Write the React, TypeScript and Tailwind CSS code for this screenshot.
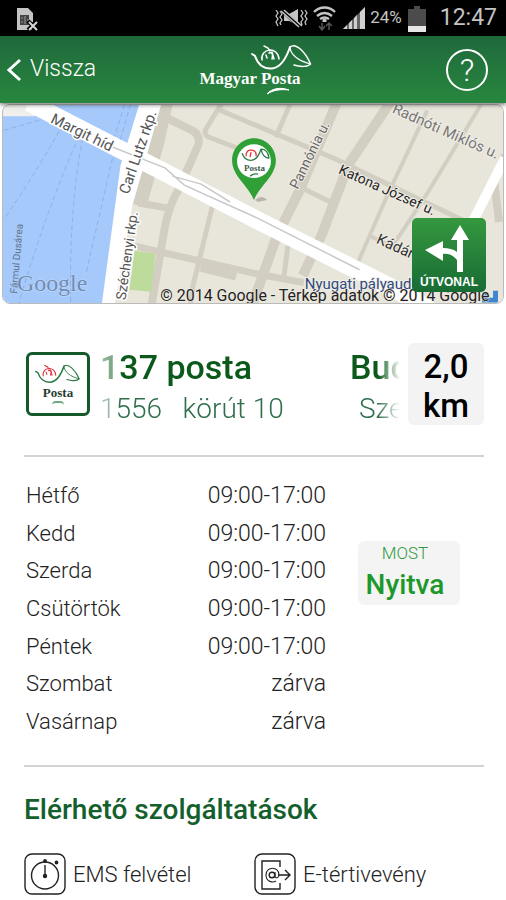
const hours = [
  { day: 'Hétfő', time: '09:00-17:00' },
  { day: 'Kedd', time: '09:00-17:00' },
  { day: 'Szerda', time: '09:00-17:00' },
  { day: 'Csütörtök', time: '09:00-17:00' },
  { day: 'Péntek', time: '09:00-17:00' },
  { day: 'Szombat', time: 'zárva' },
  { day: 'Vasárnap', time: 'zárva' },
];

function Horn({ className, tube, crown }: { className: string; tube: string; crown: string }) {
  return (
    <svg viewBox="0 0 62 27" className={className} fill="none" strokeLinecap="round" aria-hidden="true">
      <g stroke={tube}>
        <path d="M1 10 L4 12 C7 21 13 25 21 24.500 C30 23.500 35 15 39 3" strokeWidth="2" />
        <path d="M39 3 C45 -2 55 9 59.500 20 C57 23 49 23 43 21" strokeWidth="1.500" />
        <path d="M39 3 C39 10 47 17 59.500 20" strokeWidth="1.200" />
      </g>
      <g stroke={crown} strokeWidth="1.500">
        <path d="M11 16 C9 4 27 2 28 15" />
        <path d="M13 2 L17 4 L19 7" />
        <path d="M16 14 L15 11 M18 9 C22 8 22 11 21 15 M21 8 L23 15" />
      </g>
    </svg>
  );
}

function StatusBar() {
  return (
    <div className="flex h-9 items-center justify-between bg-black pr-[9px] pl-4 text-[#c4c4c4]">
      <svg viewBox="0 0 24 24" className="mt-1 h-6 w-6" aria-hidden="true">
        <path d="M1 0h11l5 5v9l-3 2 2 6H1z" fill="#c4c4c4" />
        <path d="M4 7h9v10H4z" fill="#444" />
        <path d="M5 10h2M5 14h2M9 8v8M11 12h2" stroke="#999" />
        <path d="M12 13l9 9M21 13l-9 9" stroke="#000" strokeWidth="4" />
        <path d="M13 14l8 8M21 14l-8 8" stroke="#d8d8d8" strokeWidth="2" />
      </svg>
      <div className="flex items-center">
        <svg viewBox="0 0 34 22" className="h-[22px] w-[34px]" fill="none" stroke="#c4c4c4" aria-hidden="true">
          <path d="M2 3l2 3-2 3 2 3-2 3 2 4M6 4l2 3-2 3 2 3-2 3 1 2M27 3l2 3-2 3 2 3-2 3 1 3M31 3l2 3-2 3 2 3-2 3 1 3" strokeWidth="1.300" />
          <path d="M10 7h5l9-5v16l-9-4h-5z" fill="#c4c4c4" stroke="none" />
          <path d="M8 3l19 18" stroke="#000" strokeWidth="4" />
          <path d="M7 4l18 16M10 3l18 16" strokeWidth="1.600" />
        </svg>
        <svg viewBox="0 0 26 26" className="ml-1 h-[26px] w-[26px]" fill="none" stroke="#c4c4c4" strokeWidth="2.400" aria-hidden="true">
          <path d="M2 7C8 1 17 1 23 7M5 11C10 7 15 7 20 11M8 14C11 12 14 12 17 14" />
          <path d="M12.500 14v3" strokeWidth="4" />
          <path d="M10 18v6M7 21l3 4 3-4M17 25v-6M14 21l3-3 3 3" stroke="#555" strokeWidth="1.500" />
        </svg>
        <svg viewBox="0 0 24 24" className="ml-1 h-6 w-6" aria-hidden="true">
          <path d="M1 23L23 1v22z" fill="#666" />
          <path d="M1 23l4-4v4zM7 17l3-3v9H7zM12 12l3-3v14h-3zM18 6l5-5v22h-5z" fill="#d0d0d0" />
        </svg>
        <span className="ml-1 text-[17px]">24%</span>
        <svg viewBox="0 0 18 27" className="ml-[6px] h-[27px] w-[18px]" aria-hidden="true">
          <path d="M6 1h6v3h6v23H0V4h6z" fill="#4b4b4b" />
          <path d="M0 21h18v6H0z" fill="#e6e6e6" />
        </svg>
        <span className="ml-[14px] text-[23px] leading-9">12:47</span>
      </div>
    </div>
  );
}

function Header() {
  return (
    <header className="relative z-10 grid h-[67px] grid-cols-3 items-center bg-linear-to-b from-[#1f693b] to-[#28873e] px-[6px] text-white shadow-[0_2px_4px_rgba(0,0,0,0.5)]">
      <button type="button" className="flex items-center gap-2 justify-self-start text-[23px] font-light">
        <svg viewBox="0 0 16 24" className="h-6 w-4" fill="none" stroke="#fff" strokeWidth="3" aria-hidden="true">
          <path d="M14 2L3 12l11 10" />
        </svg>
        Vissza
      </button>
      <div className="mr-[6px] flex flex-col items-center">
        <Horn className="-mb-1 ml-16 h-[27px] w-[62px]" tube="#fff" crown="#fff" />
        <span className="font-['Liberation_Serif',serif] text-[17px] leading-6 font-bold whitespace-nowrap">Magyar Posta</span>
        <svg viewBox="0 0 24 8" className="-mt-1 ml-14 h-2 w-6" aria-hidden="true">
          <path d="M1 7C6 1 15 0 23 3C15 2 7 3 1 7Z" fill="#fff" stroke="#fff" />
        </svg>
      </div>
      <button type="button" aria-label="Súgó" className="mr-3 flex h-[42px] w-[42px] items-center justify-center justify-self-end rounded-full border-2 border-white text-[32px] leading-none font-light">
        ?
      </button>
    </header>
  );
}

function MapView() {
  return (
    <section className="relative mx-[2px] mt-px h-[200px] overflow-hidden rounded-lg border border-[#bbb]">
      <svg viewBox="2 104 502 200" preserveAspectRatio="xMidYMid slice" className="block h-full w-full font-[Roboto,sans-serif]" role="img" aria-label="Térkép">
        <rect x="0" y="100" width="510" height="210" fill="#e8e5da" />
        <g fill="none" stroke="#d3cec2" strokeLinejoin="round">
          <path d="M166 100L157 142L139 206" strokeWidth="14" />
          <path d="M163 116L190 129Q201 134 198 145L178 190Q168 206 164 230L151 306" strokeWidth="8" />
          <path d="M138 203L173 209M133 246L256 274L304 283" strokeWidth="7" />
          <path d="M212 207L193 285L190 306M222 102L205 130Q204 135 209 137L248 152M218 109L334 158L480 228M290 104L276 137M300 187L331 202M288 246L284 278" strokeWidth="5" />
          <path d="M338 100L300 190L277 236L252 306M392 100L349 164L322 235L303 276" strokeWidth="10" />
          <path d="M428 110L388 195L356 268M482 104L430 190L394 245M370 236L400 250" strokeWidth="4" />
          <path d="M506 155L495 180L500 222M200 268L236 277" strokeWidth="8" />
        </g>
        <path d="M134 251L155 254L151 292L129 290Z" fill="#bddc9b" />
        <path d="M2 100H142L132 155L101 306H0Z" fill="#a6c9fb" />
        <g stroke="#8cb0e2" strokeWidth="1" strokeDasharray="5 3" fill="none">
          <path d="M3 130L38 120M62 124Q40 165 4 218M78 136Q42 220 18 304M82 138Q68 210 70 304M112 158L85 275M124 104L113 140M130 104L119 142" />
        </g>
        <path d="M2 100H34L44 113L33 116L2 116Z" fill="#f0efec" />
        <path d="M140 100H162L132 205L114 306H101L120 165Z" fill="#fff" />
        <path d="M506 158L472 225" stroke="#fff" strokeWidth="10" />
        <path d="M28 102L255 219L400 292L430 310" fill="none" stroke="#fff" strokeWidth="18" />
        <path d="M110 146L165 168L184 185L255 217L360 270M172 176L201 184L230 202" fill="none" stroke="#c9c9cc" strokeWidth="1.500" />
        <g fontSize="15" stroke="#fff" strokeWidth="3" paintOrder="stroke" fill="#555">
          <text transform="translate(49 122) rotate(26)">Margit híd</text>
          <text transform="translate(128 195) rotate(-71)">Carl Lutz rkp.</text>
          <text transform="translate(125 301) rotate(-82)" fontSize="14">Széchenyi rkp.</text>
        </g>
        <g fontSize="15" stroke="#f1eee6" strokeWidth="2" paintOrder="stroke">
          <text transform="translate(392 112) rotate(24)" fill="#777">Radnóti Miklós u.</text>
          <text transform="translate(298 190) rotate(-64)" fontSize="14" fill="#666">Pannónia u.</text>
          <text transform="translate(338 173) rotate(24)" fontSize="14" fill="#222">Katona József u.</text>
          <text transform="translate(376 243) rotate(24)" fontSize="15" fill="#333">Kádár</text>
          <text x="305" y="289" fill="#2e4b7c">Nyugati pályaud</text>
        </g>
        <text transform="translate(16 294) rotate(-85)" fontSize="10" fill="#5f7186">Fármul Dusárea</text>
        <text x="16" y="291" fontSize="24" className="font-['Liberation_Serif',serif]" fill="#6f8cb5" stroke="#c9dcf7" strokeWidth="1" paintOrder="stroke">Google</text>
        <path d="M483 303V293H488V298H494V291H499V303Z" fill="#3f86d0" />
        <text x="160" y="301" fontSize="16" fill="#222" stroke="#f1eee6" strokeWidth="1" paintOrder="stroke">© 2014 Google - Térkép adatok © 2014 Google</text>
        <path d="M255 200Q262 194 267 200L258 202Z" fill="#b9b5aa" />
        <path d="M254 138C242 138 232 148 232 160C232 176 248 185 254 200C260 185 276 176 276 160C276 148 266 138 254 138Z" fill="#2fa036" />
        <circle cx="254" cy="161" r="17" fill="#fff" />
        <g fill="none" strokeWidth="1.300">
          <path d="M242 153Q245 161 252 160Q258 159 261 149Q268 149 269 158Q263 158 261 149" stroke="#2f7d4c" />
          <path d="M246 156Q246 149 252 150Q257 151 256 156M250 157L251 152" stroke="#e33" />
          <path d="M250 176Q254 173 258 174" stroke="#2f7d4c" />
        </g>
        <text x="244" y="171" fontSize="9" className="font-['Liberation_Serif',serif]" fontWeight="700" fill="#3c5d4b">Posta</text>
      </svg>
      <button type="button" className="absolute right-[17px] bottom-[11px] flex h-[74px] w-[74px] flex-col items-center justify-end rounded-[5px] bg-linear-to-b from-[#35983f] to-[#176c34] pb-[3px] font-['Liberation_Sans',sans-serif] text-[12px] leading-[14px] font-bold text-white">
        <svg viewBox="0 0 74 54" className="h-[54px] w-[74px]" fill="#fff" aria-hidden="true">
          <path d="M45 51V19h-6L48 4l9 15h-6v32z" />
          <path d="M45 39C41 34 36 32 31 33v7L13 29l18-9v7c6 0 10 1 14 4z" />
        </svg>
        ÚTVONAL
      </button>
    </section>
  );
}

function PostOffice() {
  return (
    <section className="flex items-center border-b-2 border-[#d3d3d3] pt-[39px] pb-[30px]">
      <div className="ml-[2px] flex h-16 w-16 shrink-0 flex-col items-center rounded-[6px] border-[3px] border-[#14592a] bg-white pt-[9px]">
        <Horn className="h-[20px] w-[46px]" tube="#2b7a45" crown="#e0303a" />
        <span className="font-['Liberation_Serif',serif] text-[13px] leading-[17px] font-bold text-[#243d30]">Posta</span>
        <span className="h-1 w-3 rounded-t-full border-t-2 border-[#6ba77e]" />
      </div>
      <div className="ml-[10px] h-[82px] min-w-0 flex-1 overflow-hidden whitespace-nowrap text-[#0b5a1c] [mask-image:linear-gradient(to_right,rgba(0,0,0,0.4)_0px,rgba(0,0,0,0.6)_18px,#000_19px,#000_calc(100%-22px),transparent_100%)]">
        <h1 className="flex text-[34px] leading-[48px] font-medium">
          <span className="w-[250px] shrink-0">137 posta</span>
          <span>Bud</span>
        </h1>
        <p className="flex text-[28px] leading-9 font-light text-[#2f6f4c]">
          <span className="w-[259px] shrink-0 whitespace-pre">1556   körút 10</span>
          <span>Sze</span>
        </p>
      </div>
      <div className="ml-2 w-[76px] shrink-0 rounded-md bg-[#f3f3f3] pt-1 text-center text-[33px] leading-[39px] font-medium text-black">
        2,0 km
      </div>
    </section>
  );
}

function OpeningHours() {
  return (
    <section className="flex border-b-2 border-[#d3d3d3] pt-5 pb-[25px]">
      <table className="ml-[2px] h-[263px] w-[300px] text-[22px] leading-[37px] font-light text-[#222]">
        <tbody>
          {hours.map((row) => (
            <tr key={row.day}>
              <th scope="row" className="p-0 text-left font-light">{row.day}</th>
              <td className="p-0 text-right text-[23px]">{row.time}</td>
            </tr>
          ))}
        </tbody>
      </table>
      <div className="mt-16 ml-8 h-16 w-[102px] rounded-md bg-[#f4f4f4] pr-2 text-center">
        <p className="text-[17px] leading-6 font-light text-[#2f9a3e]">MOST</p>
        <p className="text-[28px] leading-10 font-medium text-[#1d982b]">Nyitva</p>
      </div>
    </section>
  );
}

function Services() {
  return (
    <section className="pt-[22px]">
      <h2 className="text-[28px] leading-[42px] font-medium text-[#14602c]">Elérhető szolgáltatások</h2>
      <ul className="mt-[22px] grid grid-cols-2 text-[22px] font-light text-[#222]">
        <li className="flex items-center gap-[7px]">
          <svg viewBox="0 0 42 42" className="h-[42px] w-[42px]" fill="none" stroke="#222" strokeWidth="1.400" aria-hidden="true">
            <rect x="1" y="1" width="40" height="40" rx="7" />
            <circle cx="21" cy="22.500" r="13.500" />
            <path d="M21 12v11" />
            <circle cx="21" cy="8" r="1.200" fill="#222" />
            <circle cx="21" cy="23" r="1.500" fill="#222" />
            <circle cx="32.500" cy="9.500" r="1.200" fill="#222" />
          </svg>
          EMS felvétel
        </li>
        <li className="flex items-center gap-[7px]">
          <svg viewBox="0 0 42 42" className="h-[42px] w-[42px]" fill="none" stroke="#222" strokeWidth="1.400" aria-hidden="true">
            <rect x="1" y="1" width="40" height="40" rx="7" />
            <path d="M26 14V8H8v28h18v-6M24 22h12M31 17l5 5-5 5" />
            <circle cx="18" cy="22" r="2.800" />
            <path d="M21 19v4c0 3 4 2 4-1c0-9-13-9-13 0c0 7 7 8 10 6" strokeWidth="1.100" />
          </svg>
          E-tértivevény
        </li>
      </ul>
    </section>
  );
}

export default function App() {
  return (
    <div className="min-h-screen bg-white font-[Roboto,sans-serif]">
      <StatusBar />
      <Header />
      <MapView />
      <main className="pr-[22px] pl-6">
        <PostOffice />
        <OpeningHours />
        <Services />
      </main>
    </div>
  );
}
